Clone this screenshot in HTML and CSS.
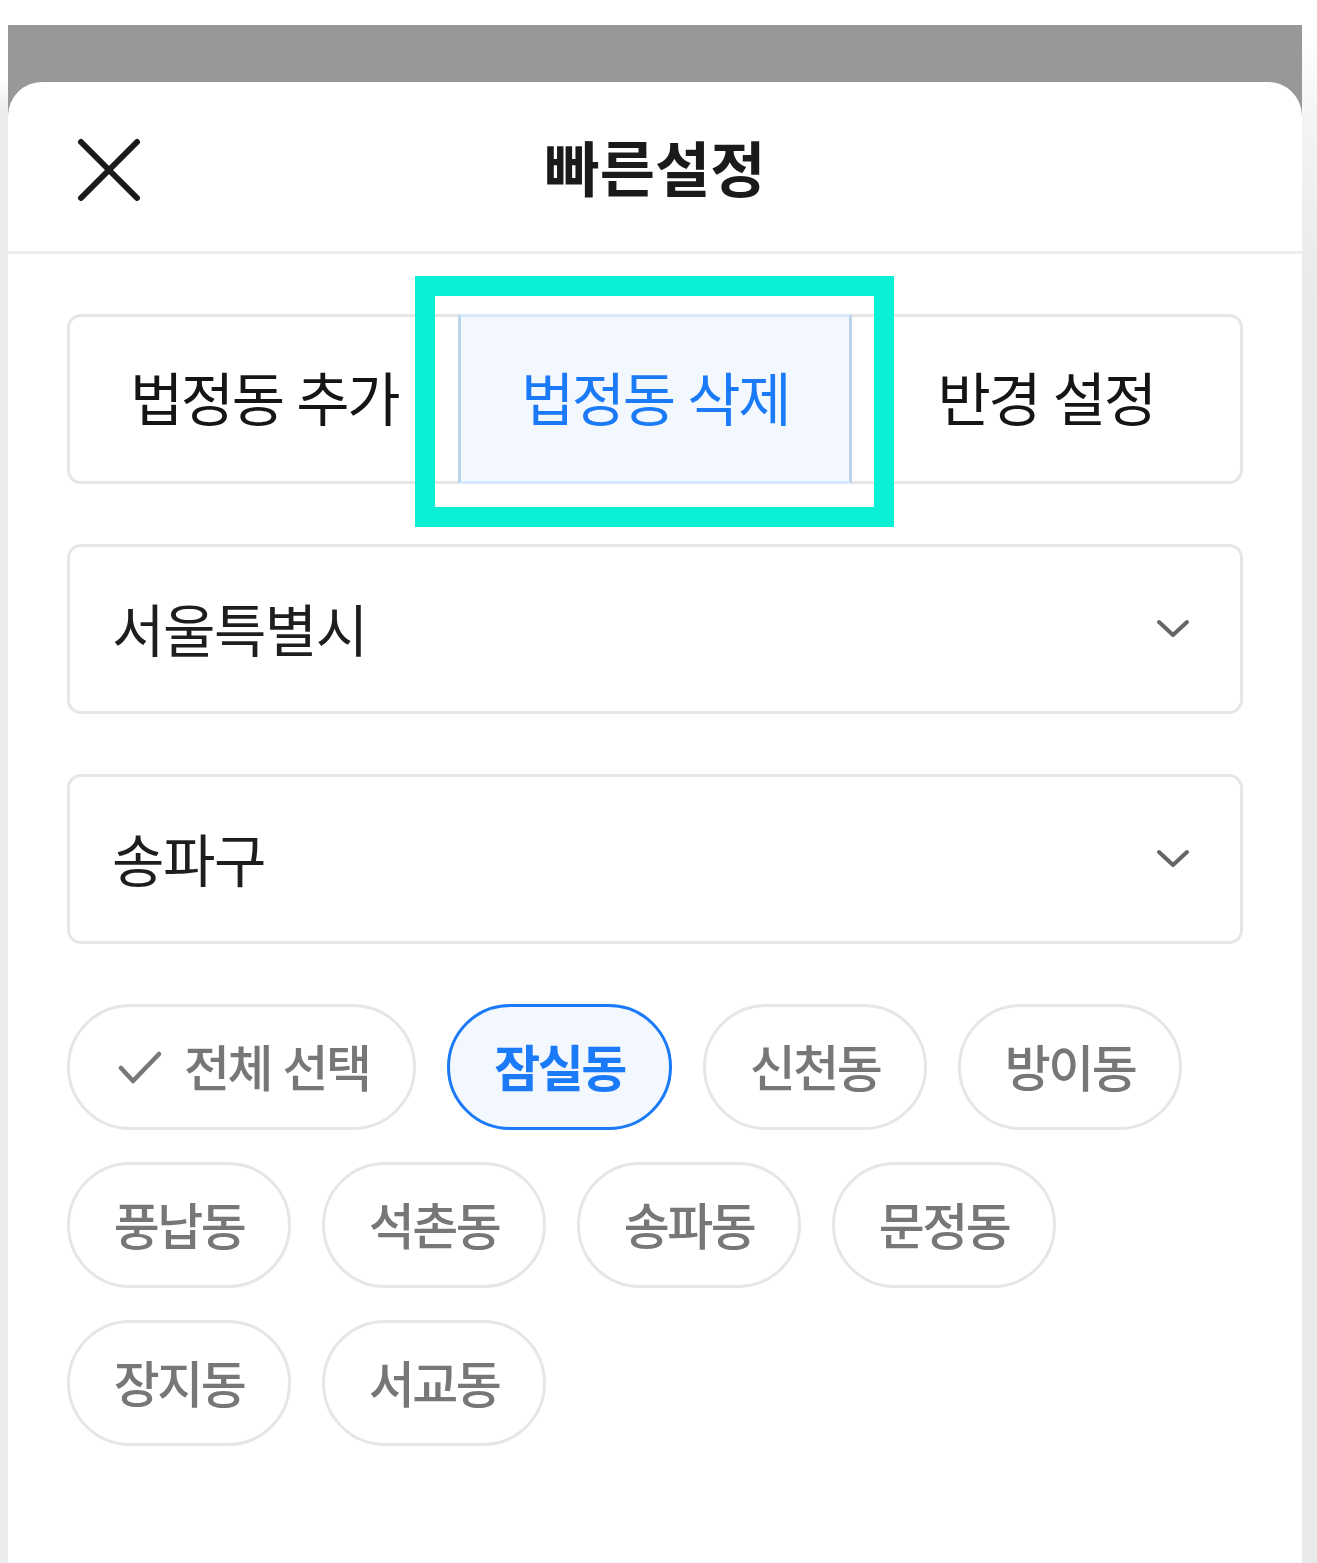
FILE: index.html
```html
<!DOCTYPE html>
<html lang="ko">
<head>
<meta charset="utf-8">
<link rel="stylesheet" href="styles.css">
</head>
<body>
<div class="page">
  <div class="edge-left"></div>
  <div class="main">
    <div class="top-white"></div>
    <div class="dim">
      <div class="sheet">
        <header class="sheet-header">
          <button class="close" aria-label="닫기">
            <svg width="64" height="64" viewBox="0 0 64 64"><path d="M4 4 L60 60 M60 4 L4 60" stroke="#1a1a1a" stroke-width="6" stroke-linecap="round" fill="none"/></svg>
          </button>
          <h1 class="title">빠른설정</h1>
        </header>
        <div class="content">
          <div class="tabs">
            <div class="tab tab-first">법정동 추가</div>
            <div class="tab tab-active">법정동 삭제</div>
            <div class="tab tab-last">반경 설정</div>
          </div>
          <div class="select">
            <span class="select-label">서울특별시</span>
            <svg class="chev" width="34" height="20" viewBox="0 0 34 20"><path d="M3 3 L17 16 L31 3" stroke="#666" stroke-width="4" stroke-linecap="round" stroke-linejoin="round" fill="none"/></svg>
          </div>
          <div class="select">
            <span class="select-label">송파구</span>
            <svg class="chev" width="34" height="20" viewBox="0 0 34 20"><path d="M3 3 L17 16 L31 3" stroke="#666" stroke-width="4" stroke-linecap="round" stroke-linejoin="round" fill="none"/></svg>
          </div>
          <div class="chips">
            <div class="chip chip-all">
              <svg class="check" width="44" height="34" viewBox="0 0 44 34"><path d="M3 17 L15 30 L41 3" stroke="#777" stroke-width="4.5" stroke-linecap="round" stroke-linejoin="round" fill="none"/></svg>
              <span>전체 선택</span>
            </div>
            <div class="chip chip-on">잠실동</div>
            <div class="chip">신천동</div>
            <div class="chip">방이동</div>
            <div class="chip">풍납동</div>
            <div class="chip">석촌동</div>
            <div class="chip">송파동</div>
            <div class="chip">문정동</div>
            <div class="chip">장지동</div>
            <div class="chip">서교동</div>
          </div>
        </div>
      </div>
    </div>
  </div>
  <div class="edge-right"></div>
</div>
<div class="highlight"></div>
</body>
</html>
```

FILE: styles.css
```css
* { box-sizing: border-box; }
html, body { margin: 0; padding: 0; }
body {
  width: 1317px;
  height: 1563px;
  overflow: hidden;
  background: #fff;
  font-family: "Noto Sans CJK KR", "Noto Sans", sans-serif;
  position: relative;
}
.page {
  display: flex;
  height: 1563px;
}
.edge-left {
  width: 8px;
  background: linear-gradient(to bottom, #fff 0, #fff 80px, #ececec 110px, #ececec 100%);
}
.edge-right {
  width: 15px;
  background: linear-gradient(to bottom, #fff 0, #fff 30px, #f4f4f4 120px, #e9e9e9 300px, #e9e9e9 100%);
}
.main {
  width: 1294px;
  display: flex;
  flex-direction: column;
}
.top-white { height: 25px; background: #fff; }
.dim {
  flex: 1;
  background: #989898;
  padding-top: 57px;
  display: flex;
  flex-direction: column;
}
.sheet {
  flex: 1;
  background: #fff;
  border-radius: 34px 34px 0 0;
}
.sheet-header {
  height: 172px;
  border-bottom: 3px solid #eeeeee;
  position: relative;
  display: flex;
  align-items: center;
  justify-content: center;
}
.close {
  position: absolute;
  left: 69px;
  top: 56px;
  border: 0;
  background: none;
  padding: 0;
  width: 64px;
  height: 64px;
}
.close svg { display: block; }
.title {
  margin: 0;
  font-size: 60px;
  font-weight: 700;
  color: #1a1a1a;
  letter-spacing: 0;
  line-height: 1;
  padding-bottom: 2px;
}
.content {
  padding: 60px 59px 0;
  display: flex;
  flex-direction: column;
  gap: 60px;
}
.tabs {
  display: grid;
  grid-template-columns: 391px 394px 391px;
  height: 170px;
}
.tab {
  display: flex;
  align-items: center;
  justify-content: center;
  font-size: 58px;
  color: #151515;
  letter-spacing: -2.5px;
  border-top: 3px solid #e6e6e6;
  border-bottom: 3px solid #e6e6e6;
  background: #fff;
  padding-bottom: 6px;
}
.tab-first {
  border-left: 3px solid #e6e6e6;
  border-radius: 14px 0 0 14px;
}
.tab-last {
  border-right: 3px solid #e6e6e6;
  border-radius: 0 14px 14px 0;
}
.tab-active {
  background: #f3f7fe;
  color: #1a7af8;
  border-top-color: #d6e8fb;
  border-bottom-color: #d6e8fb;
  border-left: 3px solid #bcd2e9;
  border-right: 3px solid #bcd2e9;
}
.select {
  height: 170px;
  border: 3px solid #e6e6e6;
  border-radius: 14px;
  display: flex;
  align-items: center;
  justify-content: space-between;
  padding: 0 50px 0 42px;
}
.select-label {
  font-size: 57px;
  color: #1e1e1e;
  letter-spacing: -1.5px;
  padding-bottom: 4px;
}
.chev { display: block; }
.chips {
  display: flex;
  flex-wrap: wrap;
  column-gap: 31px;
  row-gap: 32px;
}
.chip {
  height: 126px;
  border: 3px solid #e6e6e6;
  border-radius: 63px;
  display: flex;
  align-items: center;
  justify-content: center;
  width: 224px;
  font-size: 50px;
  font-weight: 500;
  color: #777;
  letter-spacing: -2.5px;
  background: #fff;
  padding-bottom: 4px;
}
.chip-all {
  width: 349px;
  justify-content: flex-start;
  padding-left: 48px;
  gap: 22px;
}
.check { display: block; margin-top: 6px; }
.chip-on {
  width: 225px;
  border-color: #1a7af8;
  background: #f3f7fe;
  color: #1a7af8;
  font-weight: 700;
}
.highlight {
  position: absolute;
  left: 415px;
  top: 276px;
  width: 479px;
  height: 251px;
  border: 20px solid #0bf0d4;
}
```
